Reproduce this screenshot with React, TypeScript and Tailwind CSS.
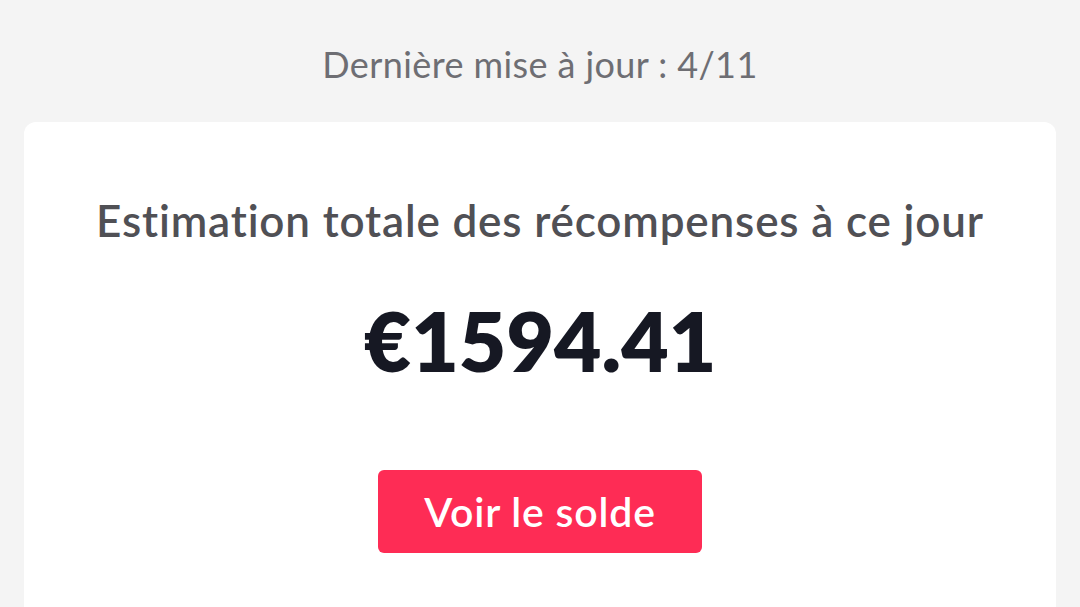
export default function App() {
  return (
    <div className="h-[607px] w-[1080px] overflow-hidden bg-[#f4f4f4] font-['Lato','Noto_Sans',sans-serif]">
      <div className="flex h-[122px] items-start justify-center pt-[42px]">
        <p className="text-[36px] leading-[44px] tracking-[0.4px] text-[#6e6e73]">Dernière mise à jour : 4/11</p>
      </div>
      <div className="mx-[24px] flex h-[520px] flex-col items-center rounded-[12px] bg-white pt-[70px]">
        <h2 className="text-[44px] leading-[56px] font-semibold tracking-[0.85px] text-[#505055]">
          Estimation totale des récompenses à ce jour
        </h2>
        <p className="mt-[42px] text-[82px] leading-[100px] font-extrabold text-[#161823]">€1594.41</p>
        <button className="mt-[80px] h-[83px] w-[324px] rounded-[6px] bg-[#fe2c55] text-[41px] font-semibold tracking-[0.8px] text-white">
          Voir le solde
        </button>
      </div>
    </div>
  );
}
